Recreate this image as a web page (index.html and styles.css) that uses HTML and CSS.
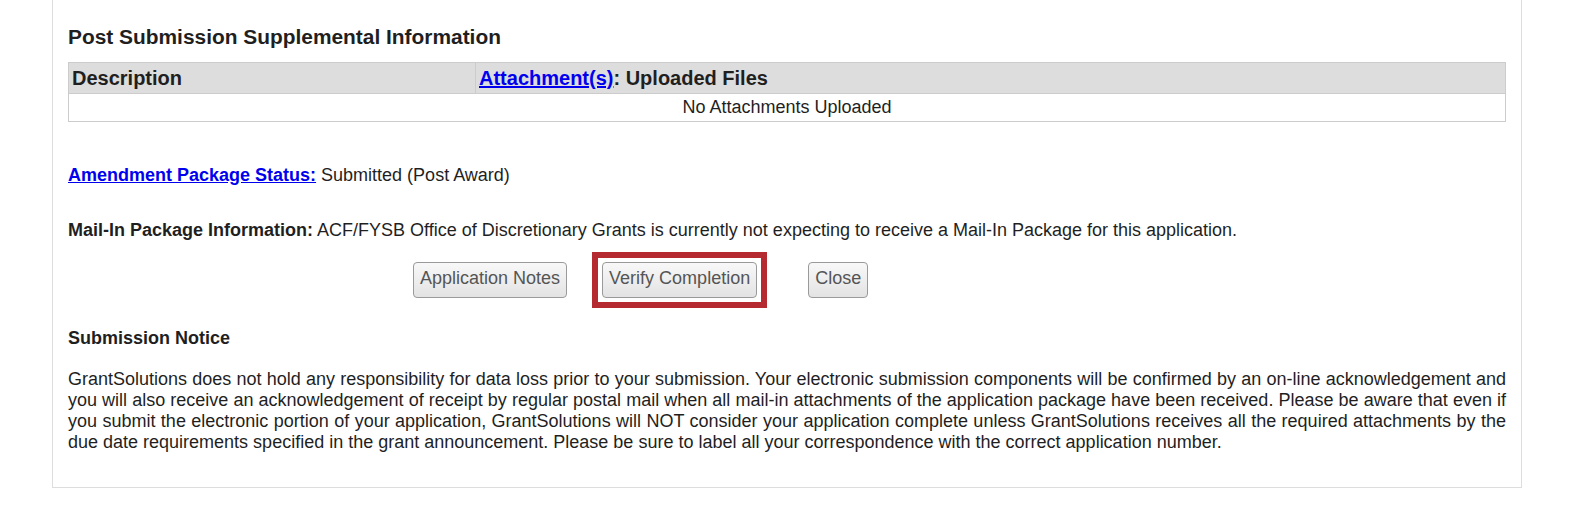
FILE: index.html
```html
<!DOCTYPE html>
<html lang="en">
<head>
<meta charset="utf-8">
<title>Post Submission Supplemental Information</title>
<link rel="stylesheet" href="styles.css">
</head>
<body>
<div class="panel">
  <h2 class="section-title">Post Submission Supplemental Information</h2>
  <table class="files">
    <thead>
      <tr>
        <th class="col-desc">Description</th>
        <th><a href="#">Attachment(s)</a>: Uploaded Files</th>
      </tr>
    </thead>
    <tbody>
      <tr>
        <td colspan="2" class="empty">No Attachments Uploaded</td>
      </tr>
    </tbody>
  </table>

  <p class="status"><a href="#" class="status-link">Amendment Package Status:</a> Submitted (Post Award)</p>

  <p class="mailin"><strong>Mail-In Package Information:</strong> ACF/FYSB Office of Discretionary Grants is currently not expecting to receive a Mail-In Package for this application.</p>

  <div class="actions">
    <button class="btn btn-notes" type="button">Application Notes</button>
    <span class="highlight"><button class="btn" type="button">Verify Completion</button></span>
    <button class="btn btn-close" type="button">Close</button>
  </div>

  <h3 class="notice-title">Submission Notice</h3>
  <p class="notice">GrantSolutions does not hold any responsibility for data loss prior to your submission. Your electronic submission components will be confirmed by an on-line acknowledgement and you will also receive an acknowledgement of receipt by regular postal mail when all mail-in attachments of the application package have been received. Please be aware that even if you submit the electronic portion of your application, GrantSolutions will NOT consider your application complete unless GrantSolutions receives all the required attachments by the due date requirements specified in the grant announcement. Please be sure to label all your correspondence with the correct application number.</p>
</div>
</body>
</html>
```

FILE: styles.css
```css
html, body {
  margin: 0;
  padding: 0;
  background: #ffffff;
}

body {
  font-family: "Liberation Sans", Arial, sans-serif;
  font-size: 18px;
  line-height: 21px;
  color: #1f1f1f;
}

.panel {
  box-sizing: border-box;
  width: 1470px;
  margin-left: 52px;
  padding: 26px 15px 34px 15px;
  border: 1px solid #dddddd;
  border-top: none;
}

.section-title {
  margin: 0 0 14px 0;
  font-size: 20.9px;
  line-height: 22px;
  font-weight: bold;
}

.files {
  width: 100%;
  border-collapse: collapse;
  border: 1px solid #cccccc;
}

.files th {
  background: #dddddd;
  border: 1px solid #cccccc;
  text-align: left;
  font-size: 20px;
  font-weight: bold;
  height: 30px;
  padding: 0 3px;
  line-height: 22px;
}

.files th.col-desc {
  width: 400px;
}

.files a {
  color: #0000ee;
}

.files td.empty {
  text-align: center;
  height: 27px;
  padding: 0 3px;
  border: 1px solid #cccccc;
}

.status {
  margin: 43px 0 0 0;
}

.status-link {
  color: #0000ee;
  font-weight: bold;
}

.mailin {
  margin: 34px 0 0 0;
}

.actions {
  display: flex;
  align-items: center;
  margin-top: 11px;
  padding-left: 345px;
}

.btn {
  box-sizing: border-box;
  height: 36px;
  padding: 0 6px 3px 6px;
  font-family: "Liberation Sans", Arial, sans-serif;
  font-size: 18px;
  color: #555555;
  background: linear-gradient(#f8f8f8, #e3e3e3);
  border: 1px solid #9a9a9a;
  border-radius: 4px;
}

.btn-notes {
  margin-right: 25px;
}

.highlight {
  display: flex;
  padding: 4px;
  border: 6px solid #b52a30;
}

.btn-close {
  margin-left: 41px;
}

.notice-title {
  margin: 20px 0 0 0;
  font-size: 18px;
  line-height: 21px;
  font-weight: bold;
}

.notice {
  margin: 20px 0 0 0;
  text-align: justify;
}
```
